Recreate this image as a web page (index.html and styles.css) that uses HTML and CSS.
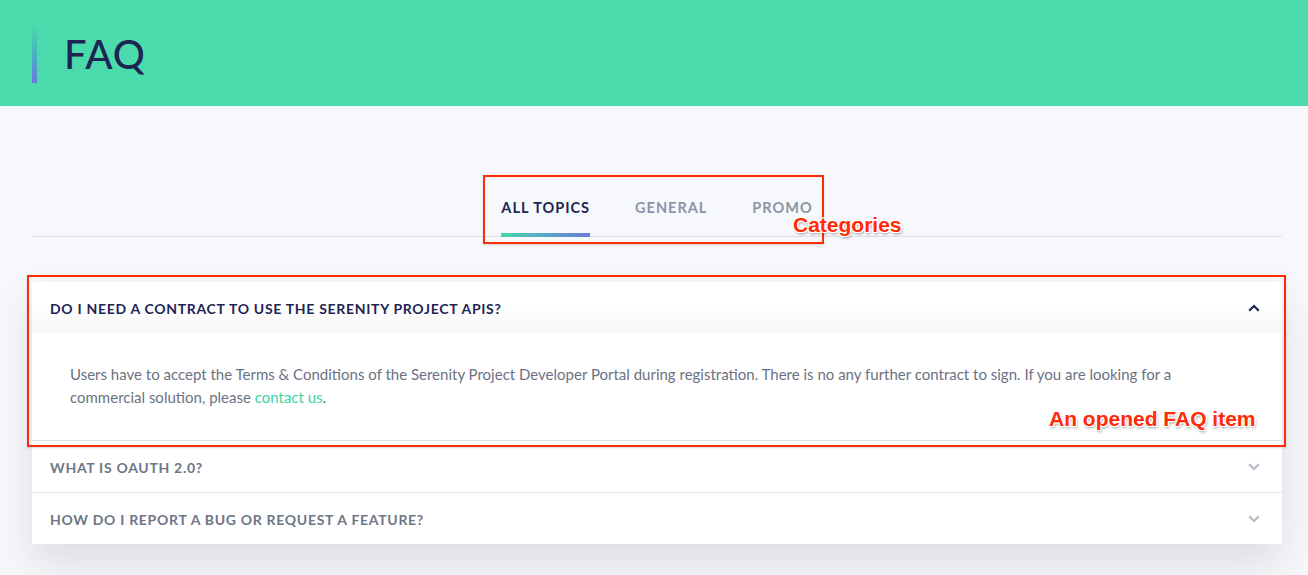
FILE: index.html
```html
<!DOCTYPE html>
<html lang="en">
<head>
<meta charset="utf-8">
<title>FAQ</title>
<link rel="stylesheet" href="styles.css">
</head>
<body>
<header class="page-header">
  <span class="title-bar"></span>
  <h1 class="page-title">FAQ</h1>
</header>
<main class="content">
  <nav class="tabs">
    <ul class="tab-list">
      <li><a class="tab tab-active" href="#">ALL TOPICS</a></li>
      <li><a class="tab" href="#">GENERAL</a></li>
      <li><a class="tab" href="#">PROMO</a></li>
    </ul>
  </nav>
  <section class="faq">
    <div class="faq-item faq-open">
      <div class="faq-q">
        <span>DO I NEED A CONTRACT TO USE THE SERENITY PROJECT APIS?</span>
        <svg class="chev chev-up" width="12" height="8" viewBox="0 0 12 8"><path d="M1.2 6.8 L6 2 L10.8 6.8" fill="none" stroke="currentColor" stroke-width="2.2"/></svg>
      </div>
      <div class="faq-a">
        <p>Users have to accept the Terms &amp; Conditions of the Serenity Project Developer Portal during registration. There is no any further contract to sign. If you are looking for a commercial solution, please <a class="link" href="#">contact us</a>.</p>
      </div>
    </div>
    <div class="faq-item">
      <div class="faq-q">
        <span>WHAT IS OAUTH 2.0?</span>
        <svg class="chev" width="12" height="8" viewBox="0 0 12 8"><path d="M1.2 1.2 L6 6 L10.8 1.2" fill="none" stroke="currentColor" stroke-width="2.2"/></svg>
      </div>
    </div>
    <div class="faq-item">
      <div class="faq-q">
        <span>HOW DO I REPORT A BUG OR REQUEST A FEATURE?</span>
        <svg class="chev" width="12" height="8" viewBox="0 0 12 8"><path d="M1.2 1.2 L6 6 L10.8 1.2" fill="none" stroke="currentColor" stroke-width="2.2"/></svg>
      </div>
    </div>
  </section>
</main>

<div class="note-box note-box-tabs"></div>
<div class="note-label note-label-tabs">Categories</div>
<div class="note-box note-box-item"></div>
<div class="note-label note-label-item">An opened FAQ item</div>
</body>
</html>
```

FILE: styles.css
```css
* { box-sizing: border-box; }

html, body {
  margin: 0;
  padding: 0;
}

body {
  background: #f7f8fb;
  font-family: "Lato", "Open Sans", sans-serif;
  min-height: 575px;
  overflow: hidden;
  position: relative;
}

.page-header {
  height: 106px;
  background: #4bdaab;
  display: flex;
  align-items: center;
  padding-left: 32px;
}

.title-bar {
  width: 5px;
  height: 58px;
  margin-top: 1px;
  background: linear-gradient(to bottom, rgba(75, 218, 171, 0) 0%, #44b7be 45%, #6b78dc 100%);
}

.page-title {
  margin: 0 0 0 27px;
  font-size: 40px;
  font-weight: 500;
  color: #1d2653;
  letter-spacing: 1px;
  line-height: 1;
  padding-top: 2px;
}

.content {
  padding: 0 26px 0 32px;
}

.tabs {
  padding-top: 92px;
  border-bottom: 1px solid #dcdfe5;
}

.tab-list {
  list-style: none;
  margin: 0;
  padding: 0;
  display: flex;
  justify-content: center;
  gap: 45px;
}

.tab {
  display: block;
  font-size: 14.5px;
  font-weight: 700;
  letter-spacing: 1px;
  line-height: 20px;
  color: #8c94a7;
  text-decoration: none;
  padding-bottom: 15px;
  border-bottom: 4px solid transparent;
  margin-bottom: -1px;
}

.tab-active {
  color: #1d2653;
  border-image: linear-gradient(to right, #45d7ab, #6b78dc) 1;
}

.faq {
  margin-top: 45px;
  background: #fff;
  box-shadow: 0 20px 40px rgba(40, 50, 80, 0.13);
}

.faq-item + .faq-item {
  border-top: 1px solid #dfe0e6;
}

.faq-q {
  height: 51px;
  display: flex;
  align-items: center;
  justify-content: space-between;
  padding: 1px 22px 0 18px;
  font-size: 14px;
  font-weight: 700;
  letter-spacing: 0.7px;
  color: #6e7586;
}

.faq-open .faq-q {
  color: #1d2653;
  background: linear-gradient(to bottom, #ffffff 0%, #ffffff 40%, #f7f7f9 100%);
}

.chev {
  color: #b6bbc8;
  display: block;
}

.chev-up {
  color: #1d2653;
}

.faq-a {
  padding: 30px 70px 31px 38px;
}

.faq-a p {
  margin: 0;
  font-size: 15px;
  line-height: 23px;
  color: #6b7283;
}

.link {
  color: #3ed5a0;
  text-decoration: none;
}

/* annotation overlays */
.note-box {
  position: absolute;
  border: 2px solid #ff2a06;
  box-shadow: 0 1px 2px rgba(0, 0, 0, 0.15);
}

.note-box-tabs {
  left: 483px;
  top: 175px;
  width: 341px;
  height: 69px;
}

.note-box-item {
  left: 27px;
  top: 275px;
  width: 1259px;
  height: 172px;
}

.note-label {
  position: absolute;
  font-family: "Liberation Sans", Arial, sans-serif;
  font-weight: 700;
  font-size: 21px;
  line-height: 24px;
  color: #ff2a06;
  text-shadow: 1px 0 0 #fff, -1px 0 0 #fff, 0 1px 0 #fff, 0 -1px 0 #fff,
    1px 1px 0 #fff, -1px -1px 0 #fff, 1px -1px 0 #fff, -1px 1px 0 #fff,
    1px 2px 3px rgba(0, 0, 0, 0.45);
}

.note-label-tabs {
  left: 793px;
  top: 213px;
}

.note-label-item {
  left: 1049px;
  top: 407px;
}
```
